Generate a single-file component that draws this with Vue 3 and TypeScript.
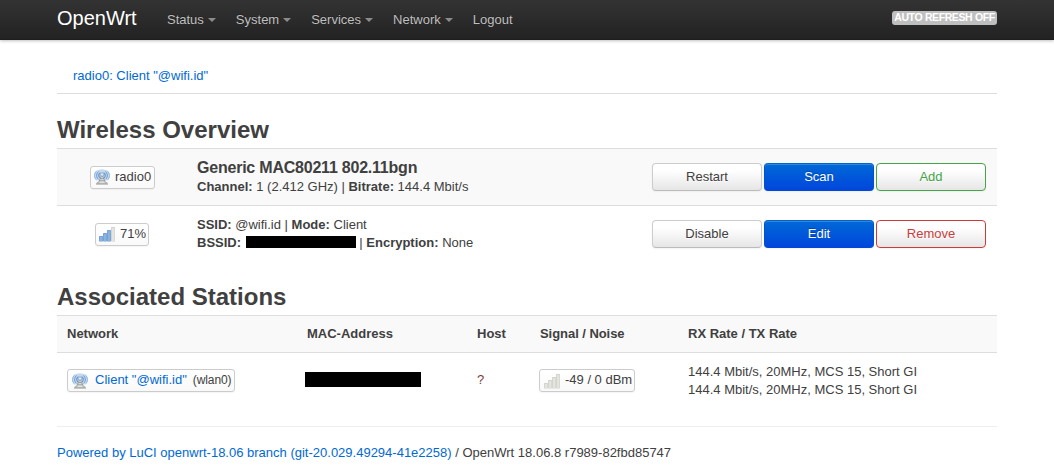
<script setup lang="ts">
import { defineComponent, h } from 'vue'

interface MenuItem { label: string; dropdown: boolean }
interface Action { label: string; kind: string }

const menu: MenuItem[] = [
  { label: 'Status', dropdown: true },
  { label: 'System', dropdown: true },
  { label: 'Services', dropdown: true },
  { label: 'Network', dropdown: true },
  { label: 'Logout', dropdown: false },
]
const radioActions: Action[] = [
  { label: 'Restart', kind: 'neutral' },
  { label: 'Scan', kind: 'primary' },
  { label: 'Add', kind: 'positive' },
]
const networkActions: Action[] = [
  { label: 'Disable', kind: 'neutral' },
  { label: 'Edit', kind: 'primary' },
  { label: 'Remove', kind: 'negative' },
]
const rate = '144.4 Mbit/s, 20MHz, MCS 15, Short GI'

const waves: [string, string][] = [
  ['M3 1.6C-.3 4.6-.3 8.6 2.8 11.4M13 1.6c3.3 3 3.3 7 .2 9.8', '#8fb5df'],
  ['M4.5 2.5C2.1 4.8 2.1 8 4.3 10.2M11.5 2.5c2.4 2.3 2.4 5.5.2 7.7', '#5f93cf'],
  ['M6 3.6C4.5 5 4.5 7.4 5.6 8.8M10 3.6c1.5 1.4 1.5 3.8.4 5.2', '#4a7fc0'],
]
const WifiIcon = defineComponent(() => () =>
  h('svg', { width: 16, height: 16, viewBox: '0 0 16 16', fill: 'none' }, [
    h('ellipse', { cx: 8, cy: 6.3, rx: 7.8, ry: 6, fill: '#c3d9f0' }),
    ...waves.map(([d, stroke]) => h('path', { d, stroke, 'stroke-width': 1 })),
    h('path', { d: 'M7.3 6.5h1.4l3 7H4.3z', fill: '#dcdfe1' }),
    h('path', { d: 'M7.3 7 4.7 13.2M8.7 7l2.6 6.2M6.4 9.6h3.2M5.6 11.8h4.8', stroke: '#858b91', 'stroke-width': 0.8 }),
    h('circle', { cx: 8, cy: 5.5, r: 1.7, fill: '#e7edf3', stroke: '#7a94b3', 'stroke-width': 0.7 }),
    h('path', { d: 'M3 13h10l1 2H2z', fill: '#b8b8b5' }),
    h('path', { d: 'M5.5 12.8h5v1.3h-5z', fill: '#e2e2df' }),
    h('path', { d: 'M2 15.2h12', stroke: '#92928f', 'stroke-width': 0.7 }),
  ]))

const bars: [number, number][] = [[0.5, 10.5], [4.5, 7.5], [8.5, 4.5], [12.5, 1.5]]
const SignalIcon = defineComponent({
  props: { level: { type: Number, required: true } },
  setup: (props) => () =>
    h('svg', { width: 16, height: 16, viewBox: '0 0 16 16' }, bars.map(([x, y], i) => {
      const on = i < props.level
      return h('g', [
        h('rect', { x: x - 0.5, y: y - 0.5, width: 4, height: 16 - y, rx: 0.7, fill: on ? '#6f9fd3' : '#cfd0ca' }),
        h('rect', { x: x + 0.3, y: y + 0.4, width: 2.6, height: 14.6 - y, fill: on ? '#8cb3df' : '#e4e5df' }),
      ])
    })),
})
</script>

<template>
  <div class="page">
    <header class="navbar">
      <div class="container bar">
        <a class="brand">OpenWrt</a>
        <nav class="menu">
          <a v-for="item in menu" :key="item.label" class="menu-item">{{ item.label }}<i v-if="item.dropdown" class="caret"></i></a>
        </nav>
        <span class="refresh">AUTO REFRESH OFF</span>
      </div>
    </header>

    <main class="container">
      <div class="tabs"><a>radio0: Client "@wifi.id"</a></div>

      <h2>Wireless Overview</h2>
      <section class="overview">
        <div class="device striped">
          <div class="device-badge"><span class="badge radio"><WifiIcon /><span>radio0</span></span></div>
          <div class="info">
            <div class="model">Generic MAC80211 802.11bgn</div>
            <div><b>Channel:</b> 1 (2.412 GHz) | <b>Bitrate:</b> 144.4 Mbit/s</div>
          </div>
          <div class="actions">
            <button v-for="a in radioActions" :key="a.label" :class="['btn', a.kind]">{{ a.label }}</button>
          </div>
        </div>
        <div class="device">
          <div class="device-badge"><span class="badge percent"><SignalIcon :level="3" /><span>71%</span></span></div>
          <div class="info">
            <div><b>SSID:</b> @wifi.id | <b>Mode:</b> Client</div>
            <div><b>BSSID:</b> <i class="redacted bssid"></i> | <b>Encryption:</b> None</div>
          </div>
          <div class="actions">
            <button v-for="a in networkActions" :key="a.label" :class="['btn', a.kind]">{{ a.label }}</button>
          </div>
        </div>
      </section>

      <h2>Associated Stations</h2>
      <section class="stations">
        <div class="station heading striped">
          <span>Network</span><span>MAC-Address</span><span>Host</span><span>Signal / Noise</span><span>RX Rate / TX Rate</span>
        </div>
        <div class="station entry">
          <div><span class="badge client"><WifiIcon /><a>Client "@wifi.id"</a><small>(wlan0)</small></span></div>
          <div class="mac"><i class="redacted"></i></div>
          <div class="host">?</div>
          <div><span class="badge noise"><SignalIcon :level="0" /><span>-49 / 0 dBm</span></span></div>
          <div class="rates">{{ rate }}<br>{{ rate }}</div>
        </div>
      </section>

      <footer><a>Powered by LuCI openwrt-18.06 branch (git-20.029.49294-41e2258)</a> / OpenWrt 18.06.8 r7989-82fbd85747</footer>
    </main>
  </div>
</template>

<style>
body { margin: 0; background: #fff; }
</style>

<style scoped>
* { box-sizing: border-box; }
.page {
  height: 468px;
  overflow: hidden;
  color: #404040;
  font: 13px/18px "Liberation Sans", Arial, sans-serif;
}
.container { width: 940px; margin: 0 auto; }
a { color: #0069d6; text-decoration: none; }
.navbar {
  height: 40px;
  background: linear-gradient(#333, #222);
  box-shadow: 0 1px 3px rgba(0, 0, 0, .25), inset 0 -1px 0 rgba(0, 0, 0, .1);
}
.bar { display: flex; align-items: flex-start; }
.brand { width: 100px; color: #fff; font-size: 20px; line-height: 20px; padding-top: 8px; }
.menu { display: flex; flex: 1; }
.menu-item {
  display: flex;
  padding: 11px 10px 0;
  color: #bfbfbf;
  line-height: 18px;
  text-shadow: 0 -1px 0 rgba(0, 0, 0, .25);
}
.caret {
  width: 0;
  height: 0;
  margin: 7px 0 0 4px;
  border: 4px solid transparent;
  border-top-color: #8c8c8c;
  border-bottom: 0;
}
.refresh {
  margin-top: 11px;
  width: 105px;
  height: 14px;
  border-radius: 3px;
  background: #bfbfbf;
  color: #fff;
  font-size: 10.5px;
  letter-spacing: -.42px;
  word-spacing: .3px;
  font-weight: bold;
  line-height: 13px;
  text-align: center;
  white-space: nowrap;
}
.tabs { height: 54px; padding: 27px 16px 0; border-bottom: 1px solid #ddd; }
h2 { margin: 0; font-size: 24px; line-height: 36px; }
.tabs + h2 { margin-top: 18px; }
.overview { height: 115px; margin-bottom: 16px; }
.device {
  display: flex;
  align-items: center;
  height: 57px;
  border-top: 1px solid #ddd;
}
.striped { background: #f9f9f9; }
.device-badge { width: 130px; padding-left: 1px; display: flex; justify-content: center; }
.info { flex: 1; padding-left: 10px; }
.model { font-size: 16px; font-weight: bold; line-height: 20px; letter-spacing: -.22px; }
.badge {
  display: inline-flex;
  align-items: center;
  height: 23px;
  padding: 0 3px;
  border: 1px solid #ccc;
  border-radius: 3px;
  background: linear-gradient(#fff, #f9f9f9);
  box-shadow: 0 1px 1px rgba(0, 0, 0, .04);
  white-space: nowrap;
}
.badge > svg { flex: none; }
.badge > span { margin-left: 5px; line-height: 18px; }
.radio { width: 65px; }
.percent { width: 54px; margin-right: 1px; }
.actions { display: flex; gap: 2px; padding-right: 11px; }
.btn {
  width: 110px;
  height: 28px;
  padding: 0 0 1px;
  border: 1px solid #ccc;
  border-bottom-color: #bbb;
  border-radius: 4px;
  background: linear-gradient(#fff, #fff 25%, #e6e6e6);
  box-shadow: inset 0 1px 0 rgba(255, 255, 255, .2), 0 1px 2px rgba(0, 0, 0, .05);
  color: #404040;
  font: 13px/18px "Liberation Sans", Arial, sans-serif;
  text-shadow: 0 1px 1px rgba(255, 255, 255, .75);
}
.primary {
  border-color: #0064cd #0050d2 #0048d2;
  background: linear-gradient(#0069d6, #0046dc);
  color: #fff;
  text-shadow: 0 -1px 0 rgba(0, 0, 0, .25);
}
.positive { border-color: #46a546; color: #46a546; }
.negative { border-color: #ca3c3c; color: #ca3c3c; }
.redacted { display: inline-block; background: #000; }
.bssid { width: 110px; height: 12px; margin: 0 0 0 1px; vertical-align: -1px; }
.station { display: grid; grid-template-columns: 240px 170px 62px 149px 299px; padding-left: 10px; }
.heading {
  height: 38px;
  align-items: center;
  border: solid #ddd;
  border-width: 1px 0;
  font-weight: bold;
}
.heading span:nth-child(4) { padding-left: 1px; letter-spacing: -.05px; }
.entry { height: 73px; padding-top: 16px; }
.entry .badge { display: flex; padding: 0 2px 0 4px; }
.entry .badge > span, .entry .badge > a, .entry .badge > small { padding-bottom: 2px; }
.client { width: 168px; }
.client a { margin-left: 7px; }
small { margin-left: 6px; font-size: 12px; letter-spacing: -.1px; }
.mac { margin-left: -2px; }
.mac .redacted { width: 116px; height: 15px; margin-top: 3px; }
.host { padding-top: 2px; color: #7a3b35; }
.noise { width: 96px; }
.rates { margin-top: -6px; }
footer { padding-top: 17px; border-top: 1px solid #eee; }
</style>
